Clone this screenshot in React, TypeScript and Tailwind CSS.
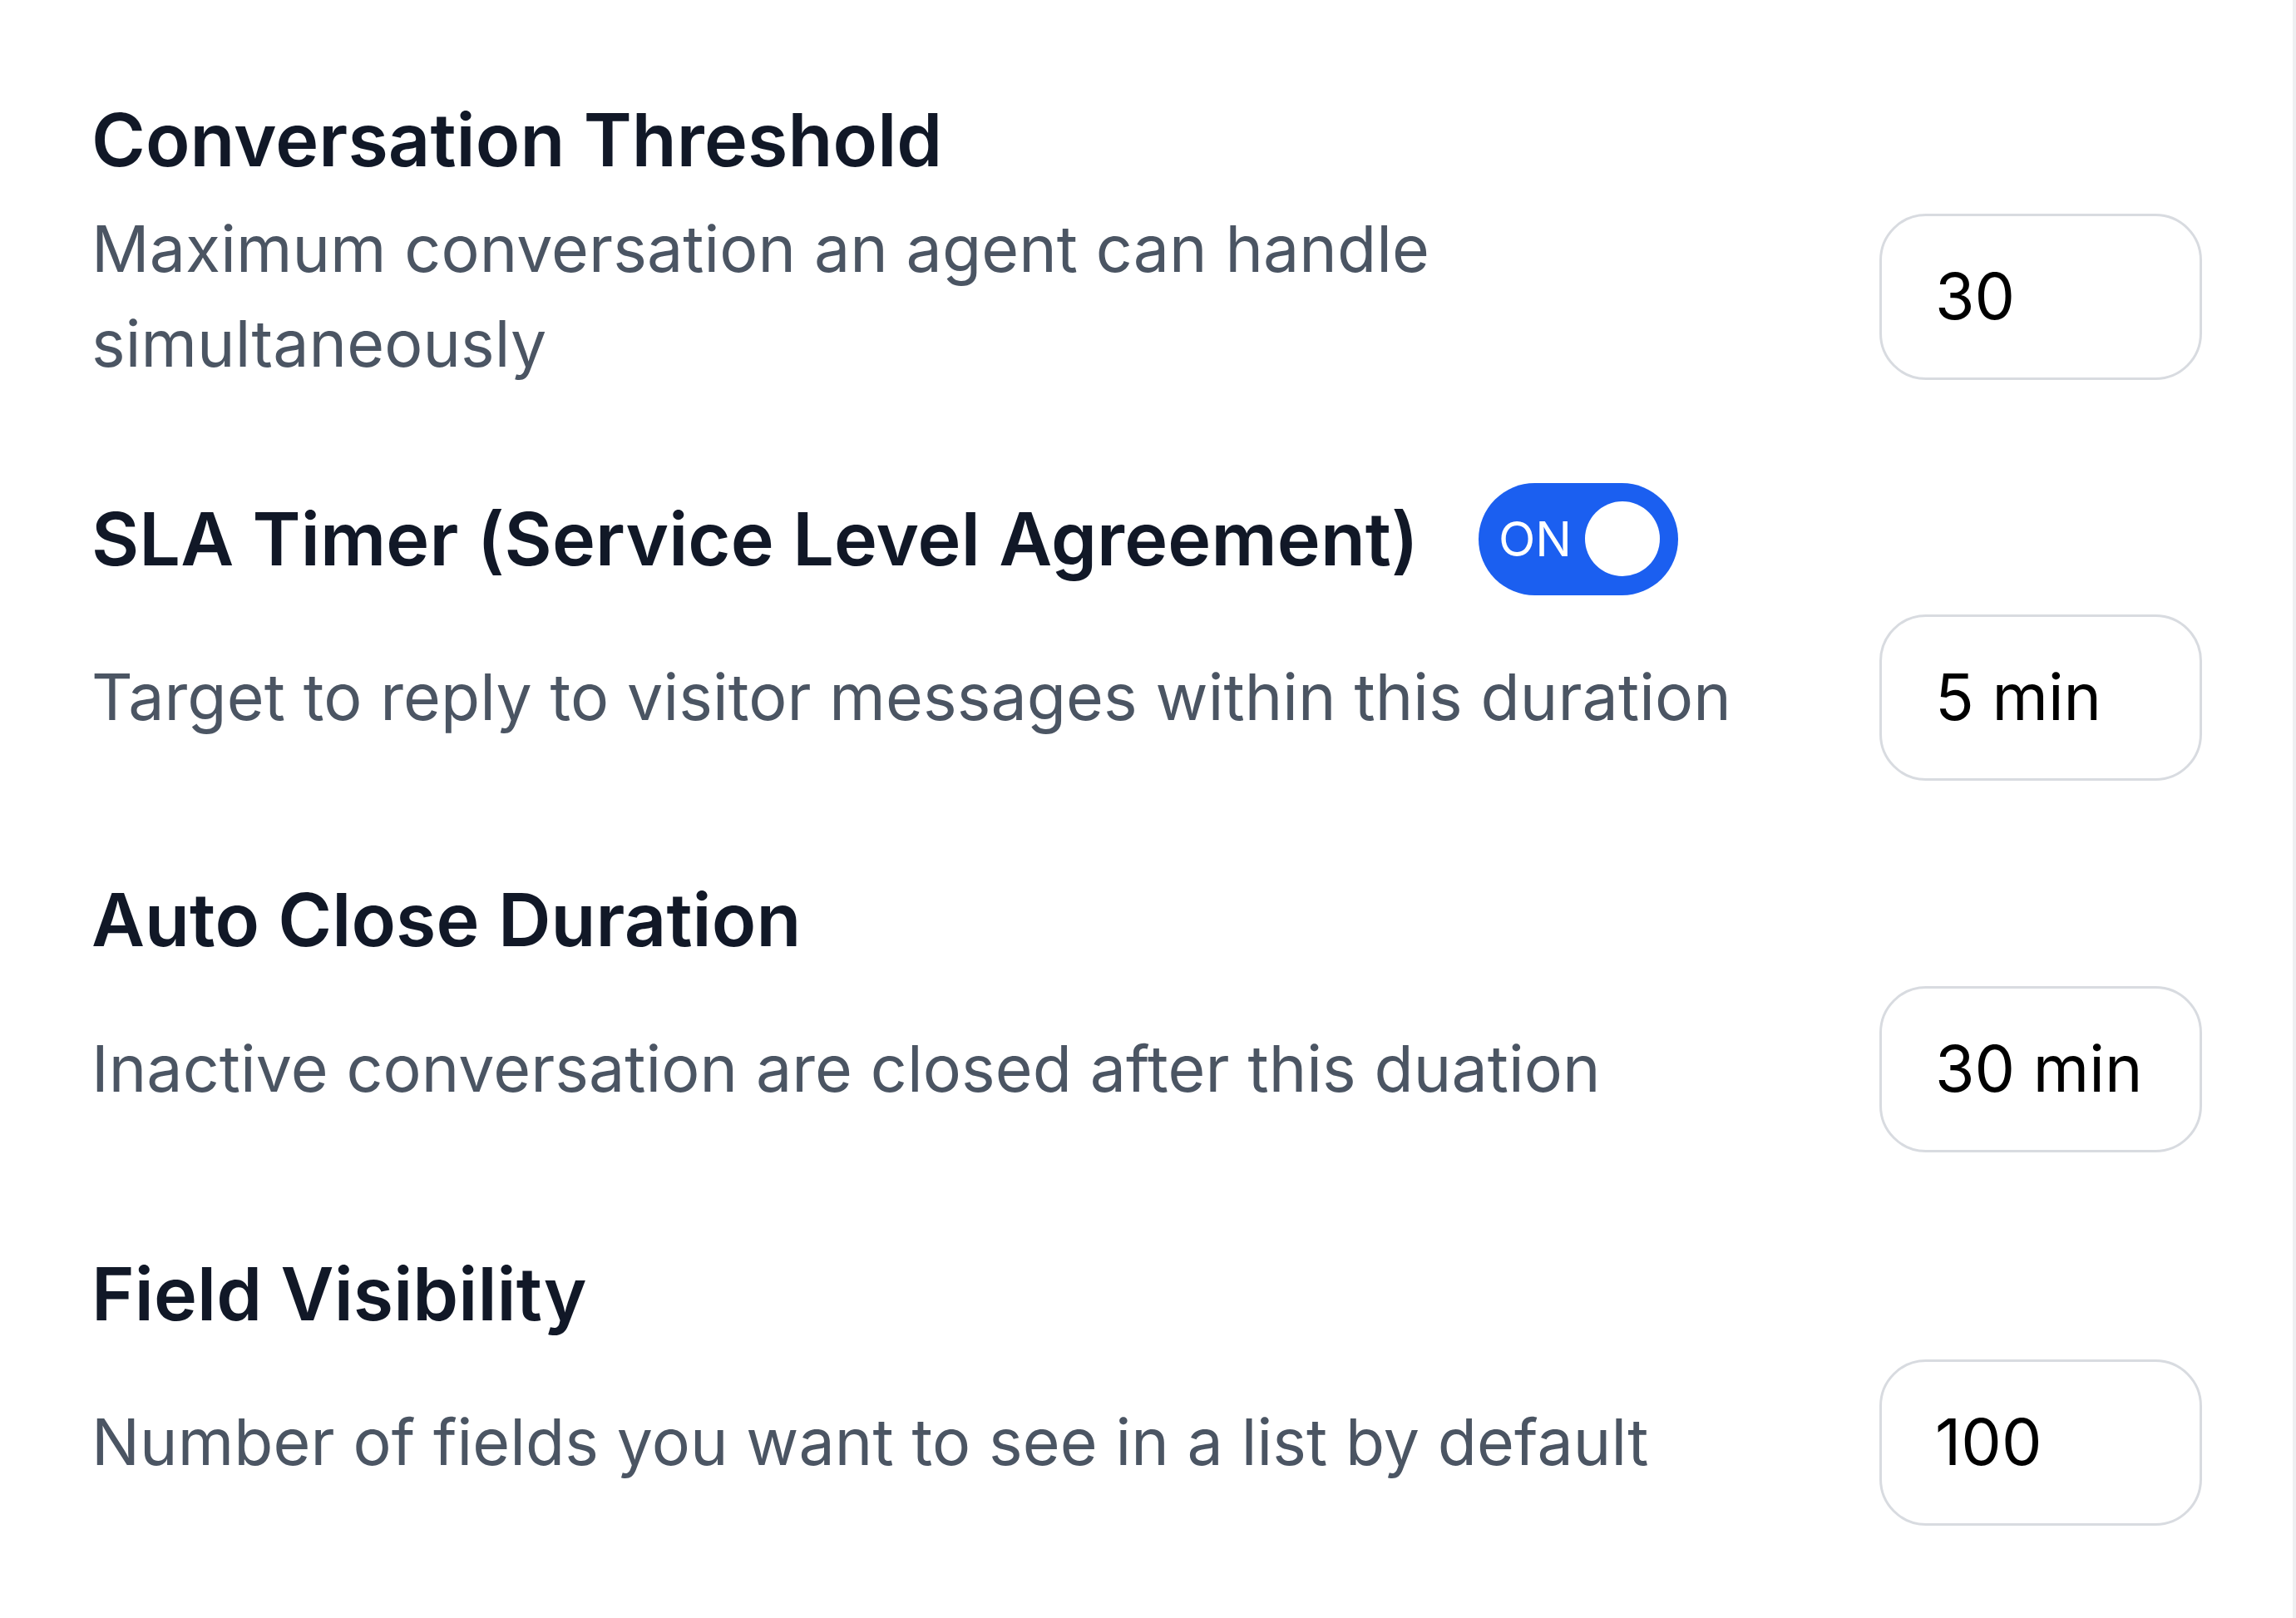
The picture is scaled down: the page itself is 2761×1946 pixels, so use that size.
const font = { fontFamily: 'Inter, "Noto Sans", sans-serif' };

type Setting = {
  title: string;
  description: string;
  value: string;
  toggle?: boolean;
  gap: string;
  top: string;
};

const settings: Setting[] = [
  {
    title: 'Conversation Threshold',
    description: 'Maximum conversation an agent can handle simultaneously',
    value: '30',
    gap: 'mt-[9px]',
    top: 'mt-0',
  },
  {
    title: 'SLA Timer (Service Level Agreement)',
    description: 'Target to reply to visitor messages within this duration',
    value: '5 min',
    toggle: true,
    gap: 'mt-[23px]',
    top: 'mt-[110px]',
  },
  {
    title: 'Auto Close Duration',
    description: 'Inactive conversation are closed after this duation',
    value: '30 min',
    gap: 'mt-[14px]',
    top: 'mt-[101px]',
  },
  {
    title: 'Field Visibility',
    description: 'Number of fields you want to see in a list by default',
    value: '100',
    gap: 'mt-[13px]',
    top: 'mt-[104px]',
  },
];

function Toggle() {
  return (
    <div className="ml-[72px] flex h-[135px] w-[240px] shrink-0 items-center justify-between rounded-full bg-[#1b5ff0] pl-[24px] pr-[22px]">
      <span className="text-[58px] leading-none font-normal text-white">ON</span>
      <span className="h-[90px] w-[90px] rounded-full bg-white" />
    </div>
  );
}

export default function App() {
  return (
    <div className="min-h-[1946px] w-[2761px] border-r-4 border-[#eeeff1] bg-white" style={font}>
      <div className="pt-[102px] pr-[109px] pl-[110px]">
        {settings.map((s) => (
          <section key={s.title} className={s.top}>
            <div className="flex items-center">
              <h2 className="text-[88px] leading-[1.5] font-semibold tracking-[0.1px] text-[#111827]">{s.title}</h2>
              {s.toggle && <Toggle />}
            </div>
            <div className={`flex items-center gap-[40px] ${s.gap}`}>
              <p className="flex-1 text-[77px] leading-[1.48] tracking-[0.1px] text-[#4b5563]">{s.description}</p>
              <div className="flex h-[200px] w-[388px] shrink-0 items-center rounded-[56px] border-[3px] border-[#d8dbe0] bg-white pl-[64px] text-[77px] text-black">
                {s.value}
              </div>
            </div>
          </section>
        ))}
      </div>
    </div>
  );
}
